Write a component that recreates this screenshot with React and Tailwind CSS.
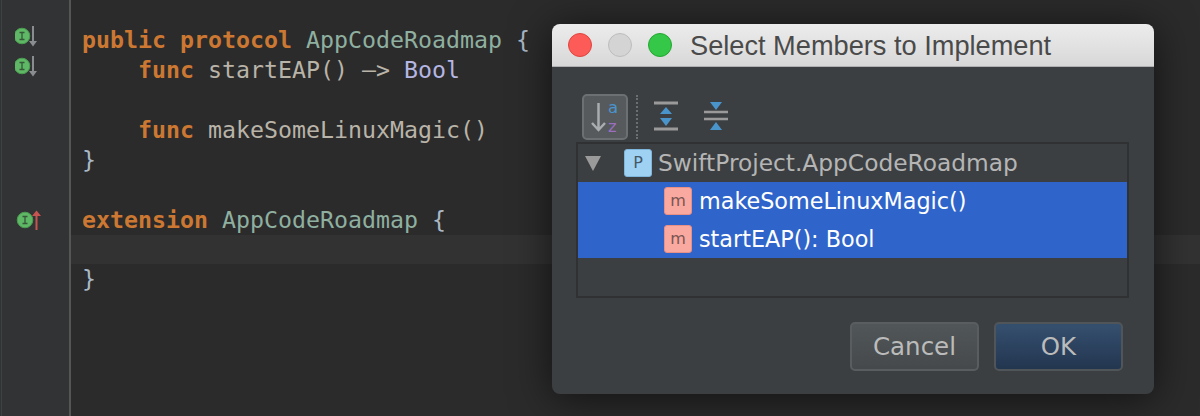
import React from 'react';

const MONO = "font-['DejaVu_Sans_Mono',monospace]";
const UI = "font-['DejaVu_Sans',sans-serif]";

function GutterIcon({ up }) {
    return (
        <svg width="30" height="30" viewBox="0 0 30 30" className="block">
            <circle cx={up ? 9 : 7} cy={up ? 15 : 11} r="7.800" fill="#5fb865" stroke="#4a9c50" strokeWidth="1" />
            <path d={up ? 'M6.500 11.500h5M9 11.500v7M6.500 18.500h5' : 'M4.500 7.500h5M7 7.500v7M4.500 14.500h5'} stroke="#35573a" strokeWidth="1.300" fill="none" />
            {up ? (
                <>
                    <path d="M20.500 10v15" stroke="#c75450" strokeWidth="2" />
                    <path d="M16 11l4.500-5.500 4.500 5.500z" fill="#c75450" />
                </>
            ) : (
                <>
                    <path d="M18 1v16" stroke="#8a8d8f" strokeWidth="2" />
                    <path d="M14 16l4 5.500 4-5.500z" fill="#8a8d8f" />
                </>
            )}
        </svg>
    );
}

function CodeLine({ children, active }) {
    return (
        <div className={`leading-[30px] pl-[11px] whitespace-pre ${active ? 'h-[29px] bg-[#323232]' : 'h-[30px]'}`}>
            {children}
        </div>
    );
}

const Kw = ({ children }) => <span className="text-[#cc7832] font-bold">{children}</span>;
const Type = ({ children }) => <span className="text-[#8fb0a0]">{children}</span>;
const Fn = ({ children }) => <span className="text-[#b9b3a8]">{children}</span>;

function Badge({ letter, blue }) {
    return (
        <div className={`w-[28px] h-[28px] rounded-[3px] border flex items-center justify-center text-[16px] ${blue ? 'bg-[#9fd2f2] border-[#7fb6dc] text-[#44586a]' : 'bg-[#f9a9a0] border-[#e88f86] text-[#7a5452]'}`}>
            {letter}
        </div>
    );
}

function MemberRow({ children }) {
    return (
        <div className="h-[38px] bg-[#2f65ca] flex items-center pl-[86px] gap-[7px] text-white text-[22.300px]">
            <Badge letter="m" />
            <span className="pt-[2px]">{children}</span>
        </div>
    );
}

function SelectMembersDialog() {
    return (
        <div className={`absolute left-[552px] top-[24px] w-[602px] h-[370px] rounded-[8px] bg-[#3c3f41] shadow-[0_4px_40px_rgba(0,0,0,0.6)] overflow-hidden flex flex-col ${UI}`}>
            <div className="h-[43px] shrink-0 bg-gradient-to-b from-[#ececec] to-[#d8d8d8] border-b border-[#b0b0b0] flex items-center pl-[16px]">
                <div className="w-[24px] h-[24px] rounded-full bg-[#fc5b57] border border-[#e0443e]" />
                <div className="w-[24px] h-[24px] rounded-full bg-[#d4d4d4] border border-[#bdbdbd] ml-[16px]" />
                <div className="w-[24px] h-[24px] rounded-full bg-[#34c748] border border-[#24a732] ml-[16px]" />
                <span className="ml-[18px] pt-[3px] text-[27.200px] text-[#4a4a4a] font-['Liberation_Sans',sans-serif]">Select Members to Implement</span>
            </div>

            <div className="h-[75px] shrink-0 flex items-start pt-[27px] pl-[30px]">
                <div className="w-[46px] h-[46px] rounded-[5px] bg-[#565a5c] border-2 border-[#6c7072] flex items-center justify-center">
                    <svg width="40" height="40" viewBox="0 0 40 40">
                        <path d="M13.500 6v27M7 26l6.500 7 6.500-7" stroke="#a9adb0" strokeWidth="2.500" fill="none" />
                        <text fontSize="16.500">
                            <tspan x="23" y="15.500" fill="#4a94cc">a</tspan>
                            <tspan x="23" y="35" fill="#9b6fc0">z</tspan>
                        </text>
                    </svg>
                </div>
            </div>

            <div className="ml-[24px] mr-[25px] h-[156px] shrink-0 border-2 border-[#2f3132] bg-[#3c3f41] text-[#b5b5b5] text-[23.300px]">
                <div className="h-[38px] flex items-center pl-[6px]">
                    <svg width="18" height="18" viewBox="0 0 18 18"><path d="M1 2h16L9 17z" fill="#9a9a9a" /></svg>
                    <div className="ml-[22px] mr-[6px]"><Badge letter="P" blue /></div>
                    <span className="pt-[1px]">SwiftProject.AppCodeRoadmap</span>
                </div>
                <MemberRow>makeSomeLinuxMagic()</MemberRow>
                <MemberRow>startEAP(): Bool</MemberRow>
            </div>

            <div className="flex justify-end gap-[15px] pr-[31px] mt-[24px] text-[24.500px] text-[#bbbbbb]">
                <button className="w-[129px] h-[49px] pt-[2px] rounded-[5px] border-2 border-[#595d5f] bg-gradient-to-b from-[#515658] to-[#45494b]">Cancel</button>
                <button className="w-[129px] h-[49px] pt-[2px] rounded-[5px] border-2 border-[#4f5558] bg-gradient-to-b from-[#35506f] to-[#233650]">OK</button>
            </div>

            <div className="absolute left-[84px] top-[71px] h-[44px] border-l-2 border-dotted border-[#6b6f71]" />
            <svg className="absolute left-[102px] top-[71px]" width="26" height="38" viewBox="0 0 26 38">
                <path d="M0 8h24M0 34h24" stroke="#9a9a9a" strokeWidth="3" />
                <path d="M12 12l6 7H6zM12 31l6-8H6z" fill="#4a94cc" />
            </svg>
            <svg className="absolute left-[152px] top-[71px]" width="26" height="38" viewBox="0 0 26 38">
                <path d="M0 17h24M0 24h24" stroke="#9a9a9a" strokeWidth="2.500" />
                <path d="M6 7h12l-6 8zM6 35h12l-6-8z" fill="#4a94cc" />
            </svg>
        </div>
    );
}

export default function App() {
    return (
        <div className="relative w-[1200px] h-[416px] overflow-hidden flex bg-[#2b2b2b]">
            <div className="w-[71px] shrink-0 bg-[#313335] border-r-2 border-[#555555] pl-[1px] relative">
                <div className="border-l border-[#3f4244] h-full pt-[25px] pl-[13px] flex flex-col">
                    <div className="h-[30px]"><GutterIcon /></div>
                    <div className="h-[30px]"><GutterIcon /></div>
                    <div className="h-[150px] flex items-end pl-[1px]"><GutterIcon up /></div>
                </div>
            </div>
            <div className={`flex-1 pt-[25px] text-[23.25px] text-[#a9b7c6] ${MONO}`}>
                <CodeLine><Kw>public protocol </Kw><Type>AppCodeRoadmap</Type> {'{'}</CodeLine>
                <CodeLine>{'    '}<Kw>func </Kw><Fn>startEAP</Fn><Fn>() –&gt; </Fn><span className="text-[#b5b6e3]">Bool</span></CodeLine>
                <CodeLine> </CodeLine>
                <CodeLine>{'    '}<Kw>func </Kw><Fn>makeSomeLinuxMagic()</Fn></CodeLine>
                <CodeLine>{'}'}</CodeLine>
                <CodeLine> </CodeLine>
                <CodeLine><Kw>extension </Kw><Type>AppCodeRoadmap</Type> {'{'}</CodeLine>
                <CodeLine active> </CodeLine>
                <CodeLine>{'}'}</CodeLine>
            </div>
            <SelectMembersDialog />
        </div>
    );
}
